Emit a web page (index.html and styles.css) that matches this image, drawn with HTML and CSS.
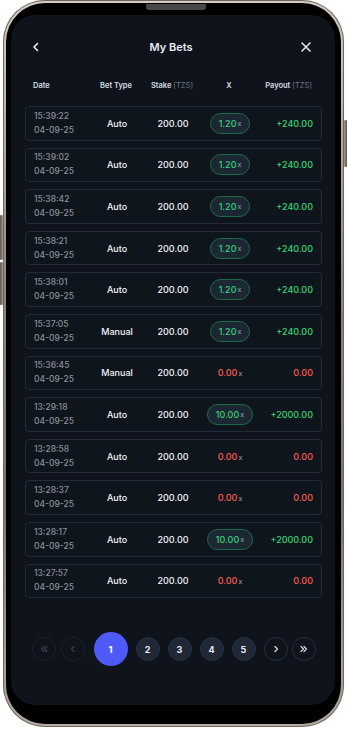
FILE: index.html
```html
<!DOCTYPE html>
<html lang="en">
<head>
<meta charset="utf-8">
<title>My Bets</title>
<link rel="stylesheet" href="styles.css">
</head>
<body>
<div class="device">
  <span class="btn-side btn-left-a"></span>
  <span class="btn-side btn-left-b"></span>
  <span class="btn-side btn-right"></span>
  <div class="bezel">
    <span class="speaker"></span>
    <div class="screen">
      <header class="topbar">
        <svg class="icon" width="12" height="12" viewBox="0 0 12 12"><path d="M7.5 2.5 4 6l3.5 3.5" fill="none" stroke="#e8ecf2" stroke-width="1.6" stroke-linecap="round" stroke-linejoin="round"/></svg>
        <h1 class="title">My Bets</h1>
        <svg class="icon" width="12" height="12" viewBox="0 0 12 12"><path d="M2 2l8 8M10 2l-8 8" fill="none" stroke="#e8ecf2" stroke-width="1.5" stroke-linecap="round"/></svg>
      </header>
      <div class="cols">
        <span class="c-date">Date</span>
        <span class="c-mid">Bet Type</span>
        <span class="c-mid">Stake <em>[TZS]</em></span>
        <span class="c-mid">X</span>
        <span class="c-pay">Payout <em>[TZS]</em></span>
      </div>
      <div class="list">
        <div class="row"><div class="dt"><span>15:39:22</span><span>04-09-25</span></div><span class="c-mid">Auto</span><span class="c-mid">200.00</span><span class="c-mid"><span class="chip">1.20<small>x</small></span></span><span class="c-pay win">+240.00</span></div>
        <div class="row"><div class="dt"><span>15:39:02</span><span>04-09-25</span></div><span class="c-mid">Auto</span><span class="c-mid">200.00</span><span class="c-mid"><span class="chip">1.20<small>x</small></span></span><span class="c-pay win">+240.00</span></div>
        <div class="row"><div class="dt"><span>15:38:42</span><span>04-09-25</span></div><span class="c-mid">Auto</span><span class="c-mid">200.00</span><span class="c-mid"><span class="chip">1.20<small>x</small></span></span><span class="c-pay win">+240.00</span></div>
        <div class="row"><div class="dt"><span>15:38:21</span><span>04-09-25</span></div><span class="c-mid">Auto</span><span class="c-mid">200.00</span><span class="c-mid"><span class="chip">1.20<small>x</small></span></span><span class="c-pay win">+240.00</span></div>
        <div class="row"><div class="dt"><span>15:38:01</span><span>04-09-25</span></div><span class="c-mid">Auto</span><span class="c-mid">200.00</span><span class="c-mid"><span class="chip">1.20<small>x</small></span></span><span class="c-pay win">+240.00</span></div>
        <div class="row"><div class="dt"><span>15:37:05</span><span>04-09-25</span></div><span class="c-mid">Manual</span><span class="c-mid">200.00</span><span class="c-mid"><span class="chip">1.20<small>x</small></span></span><span class="c-pay win">+240.00</span></div>
        <div class="row"><div class="dt"><span>15:36:45</span><span>04-09-25</span></div><span class="c-mid">Manual</span><span class="c-mid">200.00</span><span class="c-mid"><span class="lose">0.00<small>x</small></span></span><span class="c-pay lose">0.00</span></div>
        <div class="row"><div class="dt"><span>13:29:18</span><span>04-09-25</span></div><span class="c-mid">Auto</span><span class="c-mid">200.00</span><span class="c-mid"><span class="chip wide">10.00<small>x</small></span></span><span class="c-pay win">+2000.00</span></div>
        <div class="row"><div class="dt"><span>13:28:58</span><span>04-09-25</span></div><span class="c-mid">Auto</span><span class="c-mid">200.00</span><span class="c-mid"><span class="lose">0.00<small>x</small></span></span><span class="c-pay lose">0.00</span></div>
        <div class="row"><div class="dt"><span>13:28:37</span><span>04-09-25</span></div><span class="c-mid">Auto</span><span class="c-mid">200.00</span><span class="c-mid"><span class="lose">0.00<small>x</small></span></span><span class="c-pay lose">0.00</span></div>
        <div class="row"><div class="dt"><span>13:28:17</span><span>04-09-25</span></div><span class="c-mid">Auto</span><span class="c-mid">200.00</span><span class="c-mid"><span class="chip wide">10.00<small>x</small></span></span><span class="c-pay win">+2000.00</span></div>
        <div class="row"><div class="dt"><span>13:27:57</span><span>04-09-25</span></div><span class="c-mid">Auto</span><span class="c-mid">200.00</span><span class="c-mid"><span class="lose">0.00<small>x</small></span></span><span class="c-pay lose">0.00</span></div>
      </div>
      <nav class="pager">
        <div class="pair pair-l">
          <span class="pg ghost dim"><svg width="10" height="10" viewBox="0 0 10 10"><path d="M5 2.5 2.5 5 5 7.5M8 2.5 5.5 5 8 7.5" fill="none" stroke="#3b4452" stroke-width="1.1" stroke-linecap="round" stroke-linejoin="round"/></svg></span>
          <span class="pg ghost dim"><svg width="10" height="10" viewBox="0 0 10 10"><path d="M6 2.5 3.5 5 6 7.5" fill="none" stroke="#3b4452" stroke-width="1.1" stroke-linecap="round" stroke-linejoin="round"/></svg></span>
        </div>
        <span class="pg active">1</span>
        <span class="pg num">2</span>
        <span class="pg num">3</span>
        <span class="pg num">4</span>
        <span class="pg num">5</span>
        <div class="pair pair-r">
          <span class="pg ghost"><svg width="10" height="10" viewBox="0 0 10 10"><path d="M4 2.5 6.5 5 4 7.5" fill="none" stroke="#d8dde5" stroke-width="1.2" stroke-linecap="round" stroke-linejoin="round"/></svg></span>
          <span class="pg ghost"><svg width="10" height="10" viewBox="0 0 10 10"><path d="M2 2.5 4.5 5 2 7.5M5 2.5 7.5 5 5 7.5" fill="none" stroke="#d8dde5" stroke-width="1.2" stroke-linecap="round" stroke-linejoin="round"/></svg></span>
        </div>
      </nav>
    </div>
  </div>
</div>
</body>
</html>
```

FILE: styles.css
```css
* { box-sizing: border-box; }
html, body { margin: 0; padding: 0; background: #ffffff; }
body {
  width: 347px;
  height: 730px;
  font-family: "Inter", "Roboto", "Noto Sans", sans-serif;
  overflow: hidden;
}

.device {
  position: relative;
  width: 341px;
  height: 727px;
  margin-left: 3px;
  padding: 3px;
  border-radius: 42px;
  background: linear-gradient(180deg, #d6ccc2 0%, #8e847b 40%, #7d746b 70%, #b7aca1 100%);
  box-shadow: inset 0 0 0 1px #6f675f;
}

.btn-side {
  position: absolute;
  width: 3px;
  background: linear-gradient(90deg, #5d5650, #a59a90);
  border-radius: 1px;
}
.btn-left-a { left: -3px; top: 215px; height: 45px; }
.btn-left-b { left: -3px; top: 262px; height: 43px; }
.btn-right { right: -3px; top: 120px; height: 47px; background: linear-gradient(90deg, #a59a90, #5d5650); }

.bezel {
  position: relative;
  height: 100%;
  padding: 12px 6px 19px 5px;
  border-radius: 39px;
  background: #000000;
}

.speaker {
  position: absolute;
  left: 140px;
  top: 1px;
  width: 60px;
  height: 6px;
  border-radius: 0 0 3px 3px;
  background-color: #2a2a2a;
  background-image: radial-gradient(#6a6a6a 0.6px, transparent 0.8px);
  background-size: 2px 2px;
}

.screen {
  height: 100%;
  border-radius: 24px;
  background: #0f141c;
  overflow: hidden;
  display: flex;
  flex-direction: column;
}

.topbar {
  margin-top: 11px;
  height: 42px;
  padding: 0 23px 0 19px;
  display: flex;
  align-items: center;
  justify-content: space-between;
}
.icon { display: block; }
.title {
  margin: 0;
  font-size: 11px;
  font-weight: 600;
  color: #e6ebf2;
}

.cols, .row {
  display: grid;
  grid-template-columns: 58px 50px 62px 52px 57px;
  align-items: center;
}
.cols {
  height: 34px;
  margin: 0 13px 0 14px;
  padding: 0 9px 0 8px;
  font-size: 7.5px;
  font-weight: 600;
  color: #d6dae0;
}
.cols em {
  font-style: normal;
  font-weight: 400;
  color: #6b7585;
}
.c-mid { text-align: center; white-space: nowrap; }
.c-pay { text-align: right; white-space: nowrap; }

.list {
  margin: 4px 13px 0 14px;
  display: flex;
  flex-direction: column;
  gap: 7px;
}
.row {
  height: 34.6px;
  padding: 0 9px 0 8px;
  border: 1px solid #212b39;
  border-radius: 4px;
  background: #0f151d;
  font-size: 9px;
  font-weight: 500;
  color: #f2f4f7;
}
.dt {
  display: flex;
  flex-direction: column;
  gap: 1px;
  font-size: 8.5px;
  font-weight: 500;
  color: #8a9099;
  line-height: 13px;
}
.chip {
  display: inline-flex;
  align-items: center;
  justify-content: center;
  width: 40px;
  height: 21px;
  border-radius: 11px;
  border: 1px solid #1f6a48;
  background: #1b2833;
  color: #35d07a;
  font-size: 9px;
  font-weight: 500;
}
.chip.wide { width: 46px; }
.chip small, .lose small {
  font-size: 7px;
  font-weight: 500;
  color: #8a929c;
  margin-left: 1px;
}
.win { color: #2fd573; }
.lose { color: #ff5a4c; }

.pager {
  margin-top: 34px;
  display: flex;
  align-items: center;
  justify-content: center;
  gap: 8px;
  padding-left: 1px;
}
.pair { display: flex; align-items: center; }
.pair-l { gap: 5px; margin-right: 1px; }
.pair-r { gap: 4px; }
.pg {
  width: 24px;
  height: 24px;
  border-radius: 50%;
  display: flex;
  align-items: center;
  justify-content: center;
  font-size: 9px;
  font-weight: 700;
  color: #e8ecf2;
}
.pg svg { display: block; }
.ghost { border: 1px solid #243040; }
.ghost.dim { border-color: #1a222d; }
.num { background: #1e2837; border: 1px solid #253142; }
.active {
  width: 34px;
  height: 34px;
  background: #4f59f6;
  color: #ffffff;
  font-size: 9.5px;
}
```
